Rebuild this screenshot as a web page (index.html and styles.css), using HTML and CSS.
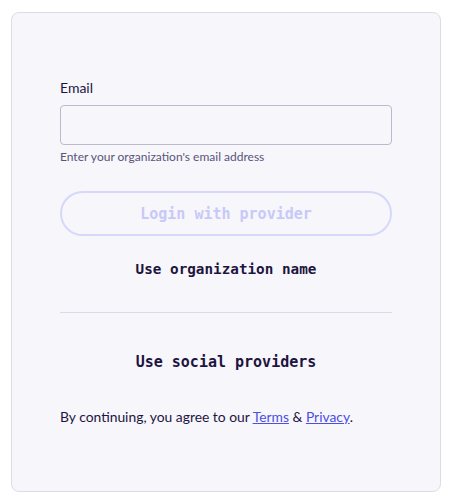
FILE: index.html
```html
<!DOCTYPE html>
<html>
<head>
<meta charset="utf-8">
<link rel="stylesheet" href="styles.css">
</head>
<body>
<div class="card">
  <label class="label" for="email">Email</label>
  <input class="input" id="email" type="email">
  <div class="help">Enter your organization's email address</div>
  <button class="btn-provider" disabled>Login with provider</button>
  <button class="btn-link btn-org">Use organization name</button>
  <hr class="divider">
  <button class="btn-link btn-social">Use social providers</button>
  <p class="terms">By continuing, you agree to our <a href="#">Terms</a> &amp; <a href="#">Privacy</a>.</p>
</div>
</body>
</html>
```
FILE: styles.css
```css
html, body { margin: 0; padding: 0; background: #ffffff; }
body { font-family: Lato, "Noto Sans", sans-serif; color: #1d1540; }
.card {
  box-sizing: border-box;
  margin: 12px 0 0 11px;
  width: 430px;
  height: 480px;
  background: #f7f6fb;
  border: 1px solid #dcdbe6;
  border-radius: 8px;
  padding: 65px 48px 0 48px;
  display: flex;
  flex-direction: column;
}
.label { font-size: 14px; line-height: 20px; margin-bottom: 7px; }
.input {
  box-sizing: border-box;
  height: 40px;
  width: 100%;
  margin: 0;
  border: 1px solid #bcb9cf;
  border-radius: 4px;
  background: #f7f6fb;
}
.help { font-size: 12px; line-height: 16px; margin-top: 4px; color: #58547a; }
.btn-provider {
  box-sizing: border-box;
  margin-top: 26px;
  height: 45px;
  width: 100%;
  border: 2px solid #d6d8fb;
  border-radius: 23px;
  background: transparent;
  color: #c7c9f8;
  font-family: "DejaVu Sans Mono", "Liberation Mono", monospace;
  font-weight: bold;
  font-size: 15px;
  padding: 0;
}
.btn-link {
  box-sizing: border-box;
  height: 44px;
  width: 100%;
  border: 0;
  background: transparent;
  color: #1d1540;
  font-family: "DejaVu Sans Mono", "Liberation Mono", monospace;
  font-weight: bold;
  padding: 0;
}
.btn-org { margin-top: 11px; font-size: 14.3px; }
.divider { margin: 21px 0 0 0; border: 0; border-top: 1px solid #dcdbe6; height: 0; }
.btn-social { margin-top: 27px; font-size: 15px; }
.terms { margin: 23px 0 0 0; font-size: 13.86px; line-height: 20px; }
.terms a { color: #4b4fe6; text-decoration: underline; }
```
